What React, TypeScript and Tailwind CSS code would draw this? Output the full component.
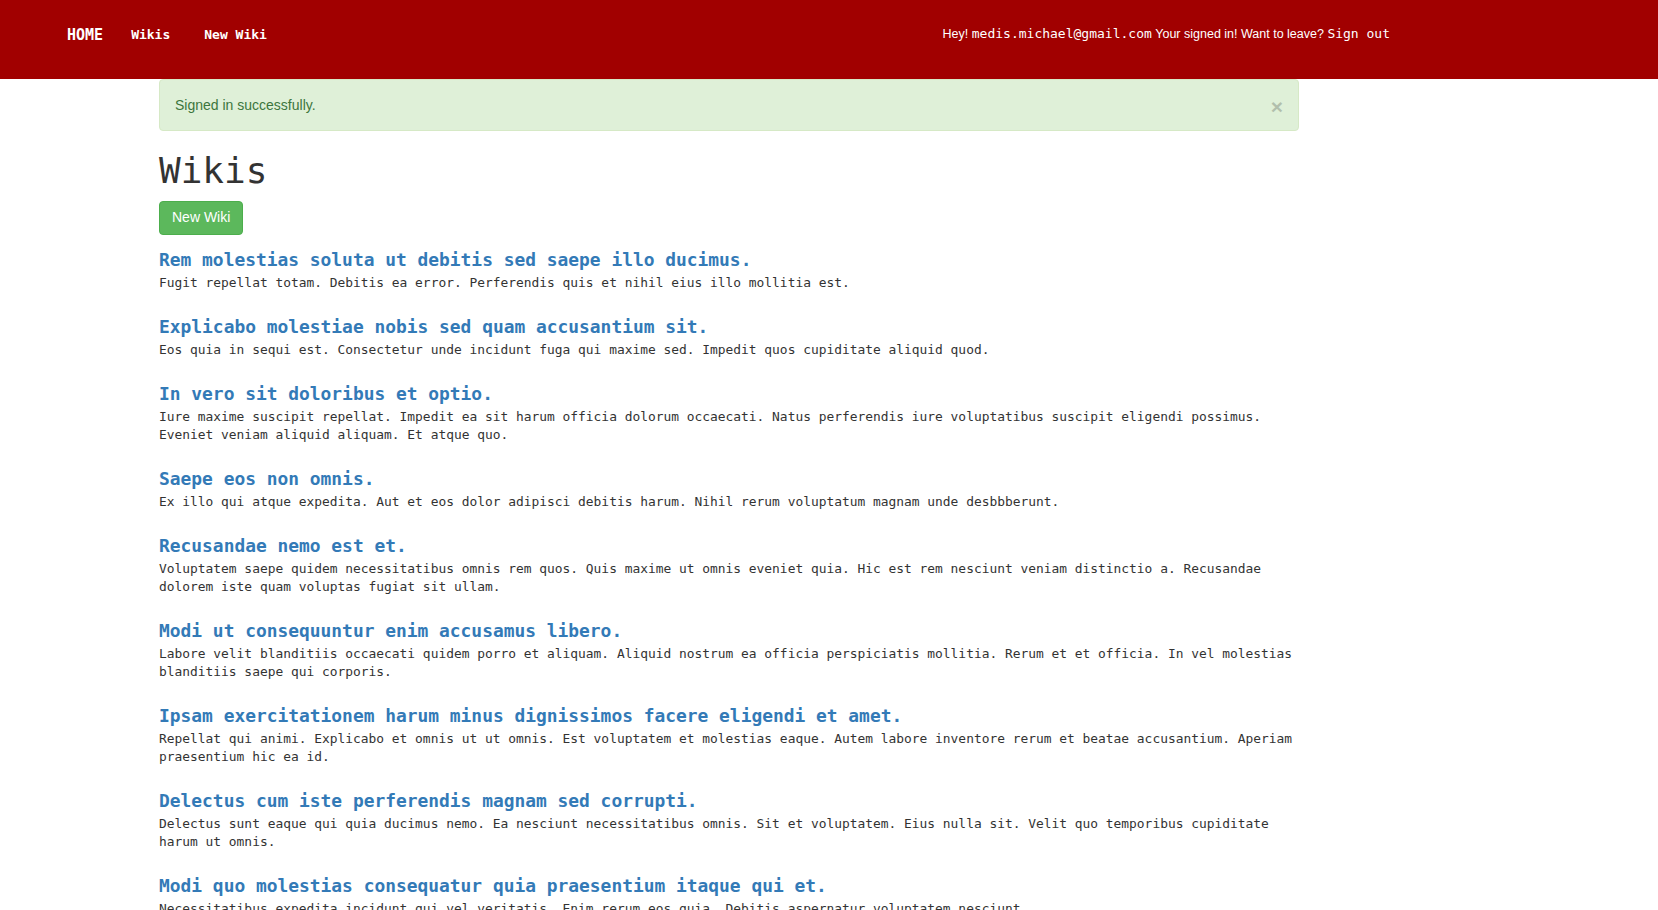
import React from "react";

const wikis = [
  {
    title: "Rem molestias soluta ut debitis sed saepe illo ducimus.",
    body: "Fugit repellat totam. Debitis ea error. Perferendis quis et nihil eius illo mollitia est.",
  },
  {
    title: "Explicabo molestiae nobis sed quam accusantium sit.",
    body: "Eos quia in sequi est. Consectetur unde incidunt fuga qui maxime sed. Impedit quos cupiditate aliquid quod.",
  },
  {
    title: "In vero sit doloribus et optio.",
    body: "Iure maxime suscipit repellat. Impedit ea sit harum officia dolorum occaecati. Natus perferendis iure voluptatibus suscipit eligendi possimus. Eveniet veniam aliquid aliquam. Et atque quo.",
  },
  {
    title: "Saepe eos non omnis.",
    body: "Ex illo qui atque expedita. Aut et eos dolor adipisci debitis harum. Nihil rerum voluptatum magnam unde desbbberunt.",
  },
  {
    title: "Recusandae nemo est et.",
    body: "Voluptatem saepe quidem necessitatibus omnis rem quos. Quis maxime ut omnis eveniet quia. Hic est rem nesciunt veniam distinctio a. Recusandae dolorem iste quam voluptas fugiat sit ullam.",
  },
  {
    title: "Modi ut consequuntur enim accusamus libero.",
    body: "Labore velit blanditiis occaecati quidem porro et aliquam. Aliquid nostrum ea officia perspiciatis mollitia. Rerum et et officia. In vel molestias blanditiis saepe qui corporis.",
  },
  {
    title: "Ipsam exercitationem harum minus dignissimos facere eligendi et amet.",
    body: "Repellat qui animi. Explicabo et omnis ut ut omnis. Est voluptatem et molestias eaque. Autem labore inventore rerum et beatae accusantium. Aperiam praesentium hic ea id.",
  },
  {
    title: "Delectus cum iste perferendis magnam sed corrupti.",
    body: "Delectus sunt eaque qui quia ducimus nemo. Ea nesciunt necessitatibus omnis. Sit et voluptatem. Eius nulla sit. Velit quo temporibus cupiditate harum ut omnis.",
  },
  {
    title: "Modi quo molestias consequatur quia praesentium itaque qui et.",
    body: "Necessitatibus expedita incidunt qui vel veritatis. Enim rerum eos quia. Debitis aspernatur voluptatem nesciunt.",
  },
];

const mono = "font-['DejaVu_Sans_Mono','Liberation_Mono',monospace]";
const sans = "font-['Liberation_Sans',Arial,sans-serif]";

export default function App() {
  return (
    <div className={`min-h-screen bg-white text-[#333] ${mono}`}>
      {/* navbar */}
      <nav className="h-[79px] bg-[#a10000] text-white flex items-start pt-[24px]">
        <div className="flex items-baseline pl-[67px]">
          <a href="#" className="text-[15px] font-bold">HOME</a>
          <a href="#" className="ml-[28px] text-[13px] font-bold -translate-y-px">Wikis</a>
          <a href="#" className="ml-[34px] text-[13px] font-bold -translate-y-px">New Wiki</a>
        </div>
        <div className="ml-auto mr-[268px] flex items-baseline text-[13px]">
          <span className={`${sans} text-[12.5px]`}>Hey!&nbsp;</span>
          <span>medis.michael@gmail.com</span>
          <span className={`${sans} text-[12.5px]`}>&nbsp;Your signed in! Want to leave?&nbsp;</span>
          <a href="#">Sign out</a>
        </div>
      </nav>

      <main className="ml-[159px] w-[1140px]">
        {/* flash */}
        <div className={`relative flex items-center h-[52px] px-[15px] border border-[#d6e9c6] bg-[#dff0d8] rounded text-[#3c763d] text-[14px] leading-5 ${sans}`}>
          <span>Signed in successfully.</span>
          <button className="absolute right-[15px] top-[16px] text-[21px] font-bold leading-none text-black opacity-20">×</button>
        </div>

        <h1 className="mt-[20px] mb-[10px] text-[36px] leading-[1.1] font-medium text-[#333]">Wikis</h1>
        <button className={`h-[34px] px-[12px] rounded bg-[#5cb85c] border border-[#4cae4c] text-white text-[14px] ${sans}`}>
          New Wiki
        </button>

        <div className="mt-[15px] flex flex-col gap-[25px]">
          {wikis.map((w) => (
            <div key={w.title}>
              <a href="#" className="block text-[17.9px] leading-[20px] font-bold text-[#337ab7] mb-[4px]">
                {w.title}
              </a>
              <p className="text-[12.9px] leading-[18px]">{w.body}</p>
            </div>
          ))}
        </div>
      </main>
    </div>
  );
}
